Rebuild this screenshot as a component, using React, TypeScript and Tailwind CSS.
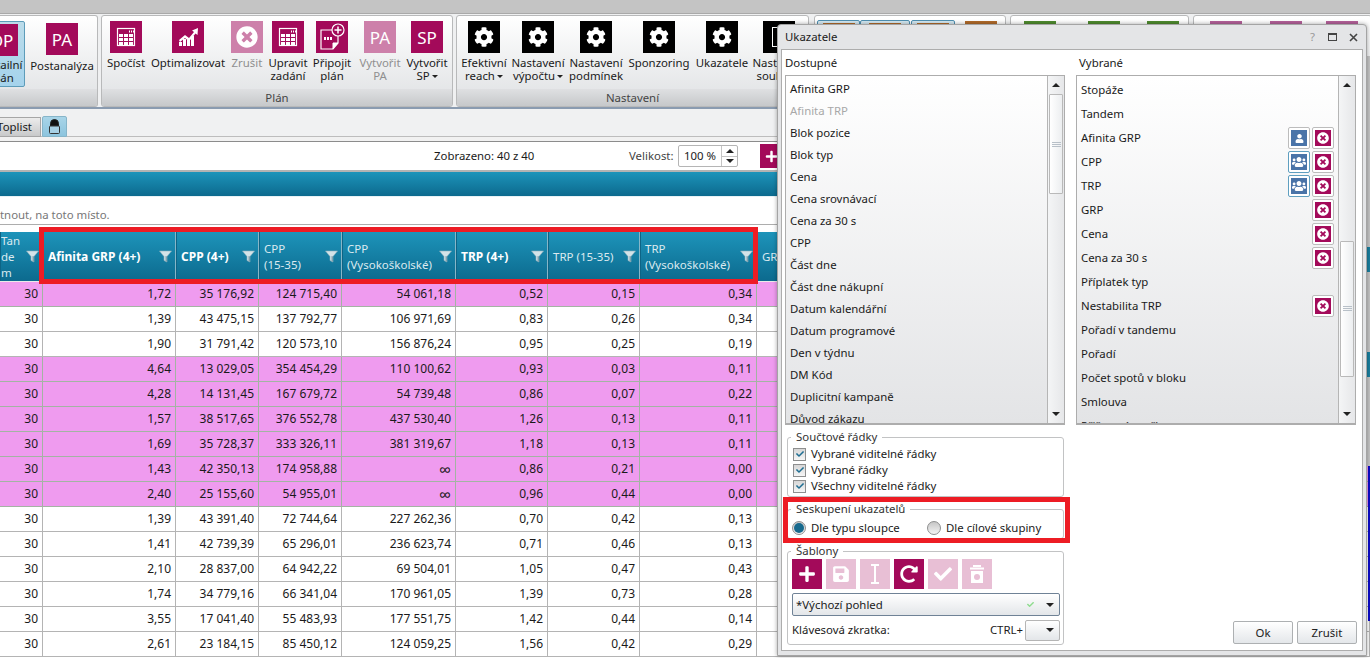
import React from "react";
import { FaCog, FaTimesCircle, FaUser, FaUsers, FaPlus, FaSave, FaRedoAlt, FaCheck } from "react-icons/fa";

const M = "bg-[#a30a5a]";
const Tile = ({ children, cls = M }: { children: React.ReactNode; cls?: string }) => (
  <div className={`w-[32px] h-[32px] shrink-0 flex items-center justify-center text-white ${cls}`}>{children}</div>
);

const TableIcon = () => (
  <svg width="32" height="32" viewBox="0 0 32 32">
    <rect x="7.5" y="7.5" width="17" height="17" fill="none" stroke="#fff" strokeWidth="1.2" />
    <rect x="19" y="9.5" width="1" height="2" fill="#fff" /><rect x="21" y="9.5" width="1" height="2" fill="#fff" /><rect x="23" y="9.5" width="1" height="2" fill="#fff" />
    {[0, 1, 2].map((r) => [0, 1, 2].map((c) => <rect key={`${r}${c}`} x={9 + c * 5} y={13 + r * 4} width="4" height="3" fill="#fff" />))}
  </svg>
);
const ChartIcon = () => (
  <svg width="32" height="32" viewBox="0 0 32 32" fill="#fff">
    <rect x="7" y="21" width="3" height="4" /><rect x="11" y="18" width="3" height="7" /><rect x="15" y="19" width="3" height="6" /><rect x="19" y="15" width="3" height="10" />
    <path d="M7 19l6-5 4 3 5-6-2-1.5 6-2.5-.5 7-2-1.5-6.5 8-4-3.5-5 4z" />
  </svg>
);
const DocIcon = () => (
  <svg width="32" height="32" viewBox="0 0 32 32">
    <path d="M5 9h17v13l-5 6H5z" fill="none" stroke="#fff" strokeWidth="1.2" />
    <path d="M22 22h-5v6" fill="#fff" stroke="#fff" strokeWidth="1" />
    <rect x="8" y="16" width="2" height="3" fill="#fff" /><rect x="11" y="16" width="2" height="3" fill="#fff" /><rect x="14" y="16" width="2" height="3" fill="#fff" />
    <circle cx="22" cy="9" r="6" fill="#a30a5a" stroke="#fff" strokeWidth="1.2" />
    <path d="M22 5.5v7M18.5 9h7" stroke="#fff" strokeWidth="1.5" />
  </svg>
);
const Caret = () => <span className="inline-block ml-[2px] align-middle border-x-[3px] border-x-transparent border-t-[3px] border-t-[#222]" />;

const Item = ({ w, tile, lines, dis, caret, top = "pt-[5px]", mtxt = "mt-[3px]" }: { w: string; tile: React.ReactNode; lines: string[]; dis?: boolean; caret?: boolean; top?: string; mtxt?: string }) => (
  <div className={`${w} ${top} shrink-0 flex flex-col items-center text-center leading-[13px] whitespace-nowrap ${dis ? "text-[#8f8f8f]" : "text-[#1a1a1a]"}`}>
    {tile}
    <div className={mtxt}>
      {lines.map((l, i) => (
        <div key={i}>{l}{caret && i === lines.length - 1 ? <Caret /> : null}</div>
      ))}
    </div>
  </div>
);

const Group = ({ cls, label, children }: { cls: string; label?: string; children: React.ReactNode }) => (
  <div className={`${cls} h-[92px] shrink-0 border border-[#b8b9ba] rounded-[3px] bg-gradient-to-b from-white to-[#dfe1e3] flex flex-col overflow-hidden`}>
    <div className="flex h-[73px]">{children}</div>
    <div className="h-[17px] bg-gradient-to-b from-[#dfe0e2] to-[#c6c8ca] text-center text-[#444] leading-[17px]">{label}</div>
  </div>
);
const Gear = () => <Tile cls="bg-black"><FaCog size={20} /></Tile>;

const TopTile = ({ cls, ml }: { cls: string; ml: string }) => <div className={`w-[32px] h-[32px] shrink-0 ${cls} ${ml} mt-[5px]`} />;
const TopBox = ({ w, ml }: { w: string; ml: string }) => (
  <div className={`${w} ${ml} h-[30px] mt-[4px] shrink-0 rounded-[2px] border border-[#4f8fb0] bg-[#d5e8f1] flex justify-center pt-[2px]`}>
    <div className="w-[32px] h-[26px] bg-[#b06a2a]" />
  </div>
);

const W = ["w-[43px]", "w-[133px]", "w-[83px]", "w-[83px]", "w-[114px]", "w-[92px]", "w-[92px]", "w-[117px]", "w-[613px]"];

const rows: string[][] = [
  ["1,72", "35 176,92", "124 715,40", "54 061,18", "0,52", "0,15", "0,34"],
  ["1,39", "43 475,15", "137 792,77", "106 971,69", "0,83", "0,26", "0,34"],
  ["1,90", "31 791,42", "120 573,10", "156 876,24", "0,95", "0,25", "0,19"],
  ["4,64", "13 029,05", "354 454,29", "110 100,62", "0,93", "0,03", "0,11"],
  ["4,28", "14 131,45", "167 679,72", "54 739,48", "0,86", "0,07", "0,22"],
  ["1,57", "38 517,65", "376 552,78", "437 530,40", "1,26", "0,13", "0,11"],
  ["1,69", "35 728,37", "333 326,11", "381 319,67", "1,18", "0,13", "0,11"],
  ["1,43", "42 350,13", "174 958,88", "∞", "0,86", "0,21", "0,00"],
  ["2,40", "25 155,60", "54 955,01", "∞", "0,96", "0,44", "0,00"],
  ["1,39", "43 391,40", "72 744,64", "227 262,36", "0,70", "0,42", "0,13"],
  ["1,41", "42 739,39", "65 296,01", "236 623,74", "0,71", "0,46", "0,13"],
  ["2,10", "28 837,00", "64 942,22", "69 504,01", "1,05", "0,47", "0,43"],
  ["1,74", "34 779,16", "66 341,04", "170 961,05", "1,39", "0,73", "0,28"],
  ["3,55", "17 041,40", "55 483,93", "177 551,75", "1,42", "0,44", "0,14"],
  ["2,61", "23 184,15", "85 450,12", "124 059,25", "1,56", "0,42", "0,29"],
];
const pink = [0, 3, 4, 5, 6, 7, 8];

const Funnel = () => (
  <svg width="13" height="13" viewBox="0 0 13 13" className="shrink-0 mt-[-1px]">
    <path d="M.5 1h12L8 6.500V12L5 10.500v-4z" fill="#d3e3e8" stroke="#8fb0bd" strokeWidth=".6" />
    <path d="M8 6.500V12l-1.500-.8V6z" fill="#7fa0ad" />
  </svg>
);

const Head = ({ w, lines, bold, noF, pl = "pl-[4px]" }: { w: string; lines: string[]; bold?: boolean; noF?: boolean; pl?: string }) => (
  <div className={`${w} ${pl} shrink-0 h-[49px] pt-[1px] border-r border-r-[#86b6c8] border-l border-l-[#0e6485] flex items-center pr-[3px] text-white bg-gradient-to-b from-[#1d94ba] to-[#0c6a8e] overflow-hidden`}>
    <div className={`flex-1 min-w-0 leading-[16px] whitespace-nowrap ${bold ? "font-bold text-[12px]" : "text-[#dbeaf0] text-[11.5px]"}`}>
      {lines.map((l) => <div key={l}>{l}</div>)}
    </div>
    {!noF && <Funnel />}
  </div>
);

const UpArrow = () => <div className="border-x-[4px] border-x-transparent border-b-[4px] border-b-[#222]" />;
const DownArrow = () => <div className="border-x-[4px] border-x-transparent border-t-[4px] border-t-[#222]" />;

const Scrollbar = ({ gap, h, grip }: { gap: string; h: string; grip: string }) => (
  <div className="w-[17px] shrink-0 h-full border-l border-l-[#b5b5b5] flex flex-col items-center bg-gradient-to-r from-[#f4f5f6] to-[#e6e7e9]">
    <div className="h-[18px] flex items-center justify-center"><UpArrow /></div>
    <div className={`${gap} ${h} w-[14px] bg-gradient-to-r from-white to-[#eceef0] border border-[#b9b9b9] rounded-[1px] flex flex-col items-center`}>
      <div className={`${grip} w-[9px] h-[5px] border-y border-y-[#b8c0c8] flex items-center`}><div className="w-full h-px bg-[#b8c0c8]" /></div>
    </div>
    <div className="mt-auto h-[18px] flex items-center justify-center"><DownArrow /></div>
  </div>
);

const availableList = ["Afinita GRP", "Afinita TRP", "Blok pozice", "Blok typ", "Cena", "Cena srovnávací", "Cena za 30 s", "CPP", "Část dne", "Část dne nákupní", "Datum kalendářní", "Datum programové", "Den v týdnu", "DM Kód", "Duplicitní kampaně", "Důvod zákazu"];

const selectedList: [string, string?, boolean?][] = [
  ["Stopáže"], ["Tandem"], ["Afinita GRP", "one", true], ["CPP", "many", true], ["TRP", "many", true], ["GRP", undefined, true], ["Cena", undefined, true], ["Cena za 30 s", undefined, true], ["Příplatek typ"], ["Nestabilita TRP", undefined, true], ["Pořadí v tandemu"], ["Pořadí"], ["Počet spotů v bloku"], ["Smlouva"], ["Přiřazení značky"],
];

const SmallBtn = ({ children, cls, frame }: { children: React.ReactNode; cls: string; frame: string }) => (
  <div className={`w-[22px] h-[22px] ml-[2px] rounded-[2px] border bg-white flex items-center justify-center ${frame}`}>
    <div className={`w-[16px] h-[16px] flex items-center justify-center text-white ${cls}`}>{children}</div>
  </div>
);

const Check = ({ label }: { label: string }) => (
  <div className="flex items-center h-[16px]">
    <div className="w-[13px] h-[13px] border border-[#8e8f8f] bg-gradient-to-b from-[#d6d6d6] to-[#f6f6f6] flex items-center justify-center text-[#1f6e92] shrink-0"><FaCheck size={8} /></div>
    <span className="ml-[5px]">{label}</span>
  </div>
);
const Radio = ({ label, on, w }: { label: string; on?: boolean; w: string }) => (
  <div className={`flex items-center ${w}`}>
    <div className="w-[14px] h-[14px] rounded-full border border-[#8e8f8f] bg-gradient-to-b from-[#c6c6c6] to-[#f4f4f4] flex items-center justify-center shrink-0">
      {on && <div className="w-[10px] h-[10px] rounded-full bg-[#17698d]" />}
    </div>
    <span className="ml-[5px]">{label}</span>
  </div>
);
const Field = ({ legend, cls, children }: { legend: string; cls: string; children: React.ReactNode }) => (
  <div className={`relative ml-[5px] w-[277px] border border-[#c2c3c4] rounded-[3px] ${cls}`}>
    <span className="absolute left-[3px] -top-[9px] bg-white px-[5px] leading-[16px] text-[#333]">{legend}</span>
    {children}
  </div>
);
const SqBtn = ({ children, on }: { children: React.ReactNode; on?: boolean }) => (
  <div className={`w-[30px] h-[30px] flex items-center justify-center text-white ${on ? "bg-[#a30a5a]" : "bg-[#e8bfd5]"}`}>{children}</div>
);
const Btn = ({ label }: { label: string }) => (
  <div className="w-[60px] h-[23px] rounded-[2px] border border-[#adb0b2] bg-gradient-to-b from-white to-[#e4e7ea] flex items-center justify-center text-[#222]">{label}</div>
);

export default function App() {
  return (
    <div className="relative w-[1370px] h-[658px] overflow-hidden bg-white text-[11.4px] text-[#1a1a1a] font-['Noto_Sans','Open_Sans',sans-serif]">
      <div className="h-[14px] bg-[#c4c4c4] border-b border-b-[#a9a9a9]" />
      {/* ribbon */}
      <div className="h-[95px] bg-[#eff0f1] border-b-2 border-b-[#8a9bb0] flex pt-px">
        <Group cls="w-[98px] border-l-0 rounded-l-none">
          <div className="flex -ml-[21px]">
            <div className="relative w-[46px] h-[66px] mt-[5px] rounded-[2px] border border-[#5d9cb9] bg-gradient-to-b from-[#bcdcea] to-[#a5d3ec]">
              <div className="w-full flex flex-col items-center pt-[2px] leading-[13px] whitespace-nowrap text-center">
                <Tile><span className="text-[17px]">DP</span></Tile>
                <div className="mt-[2px]">Detailní</div>
                <div>plán</div>
              </div>
            </div>
            <Item w="w-[74px]" top="pt-[7px]" mtxt="mt-[4px]" tile={<Tile><span className="text-[17px]">PA</span></Tile>} lines={["Postanalýza"]} />
          </div>
        </Group>
        <Group cls="w-[352px] ml-[3px]" label="Plán">
          <div className="flex pl-[2px]">
            <Item w="w-[44px]" tile={<Tile><TableIcon /></Tile>} lines={["Spočíst"]} />
            <Item w="w-[80px]" tile={<Tile><ChartIcon /></Tile>} lines={["Optimalizovat"]} />
            <Item w="w-[38px]" dis tile={<Tile cls="bg-[#cd80aa]"><FaTimesCircle size={22} /></Tile>} lines={["Zrušit"]} />
            <Item w="w-[44px]" tile={<Tile><TableIcon /></Tile>} lines={["Upravit", "zadání"]} />
            <Item w="w-[44px]" tile={<Tile><DocIcon /></Tile>} lines={["Připojit", "plán"]} />
            <Item w="w-[52px]" dis tile={<Tile cls="bg-[#cd80aa]"><span className="text-[17px]">PA</span></Tile>} lines={["Vytvořit", "PA"]} />
            <Item w="w-[42px]" caret tile={<Tile><span className="text-[17px]">SP</span></Tile>} lines={["Vytvořit", "SP"]} />
          </div>
        </Group>
        <Group cls="w-[353px] ml-[3px]" label="Nastavení">
          <div className="flex pl-[5px]">
            <Item w="w-[44px]" caret tile={<Gear />} lines={["Efektivní", "reach"]} />
            <Item w="w-[64px]" caret tile={<Gear />} lines={["Nastavení", "výpočtu"]} />
            <Item w="w-[52px]" tile={<Gear />} lines={["Nastavení", "podmínek"]} />
            <Item w="w-[74px]" tile={<Gear />} lines={["Sponzoring"]} />
            <Item w="w-[52px]" tile={<Gear />} lines={["Ukazatele"]} />
            <Item w="w-[62px]" tile={<Tile cls="bg-black"><div className="w-[14px] h-[20px] border border-white" /></Tile>} lines={["Nastavení", "souboru"]} />
          </div>
        </Group>
        <Group cls="w-[192px] ml-[5px]">
          <TopBox w="w-[43px]" ml="ml-[2px]" />
          <TopBox w="w-[50px]" ml="ml-0" />
          <TopBox w="w-[44px]" ml="ml-[1px]" />
          <TopTile cls="bg-[#b06a2a]" ml="ml-[10px]" />
        </Group>
        <Group cls="w-[179px] ml-[4px]">
          <TopTile cls="bg-[#4e8a2e]" ml="ml-[13px]" />
          <TopTile cls="bg-[#4e8a2e]" ml="ml-[32px]" />
          <TopTile cls="bg-[#4e8a2e]" ml="ml-[27px]" />
        </Group>
        <Group cls="w-[179px] ml-[4px]">
          <TopTile cls="bg-[#b4619a]" ml="ml-[16px]" />
          <TopTile cls="bg-[#b4619a]" ml="ml-[28px]" />
          <TopTile cls="bg-[#b4619a]" ml="ml-[24px]" />
        </Group>
      </div>
      {/* tabs */}
      <div className="h-[28px] bg-[#f0f1f2] border-b border-b-[#bdbdbd] flex items-end">
        <div className="w-[41px] h-[20px] -mb-px border border-l-0 border-[#a6a6a6] bg-gradient-to-b from-[#ececec] to-[#c8c9ca] overflow-hidden flex items-center justify-end pr-[8px]">Toplist</div>
        <div className="ml-[1px] w-[25px] h-[21px] -mb-px border border-[#86b5c9] rounded-t-[2px] bg-gradient-to-b from-[#a9d5e8] to-[#8cc4de] flex items-center justify-center">
          <svg width="13" height="15" viewBox="0 0 13 15">
            <path d="M2.500 7V4.500a4 4 0 018 0V7z" fill="#111" stroke="#222" />
            <rect x="1.500" y="7" width="10" height="7.500" rx="1" fill="#a7d0e4" stroke="#333" />
          </svg>
        </div>
      </div>
      <div className="h-[5px] bg-[#f1f1f1] border-b border-b-[#8c8c8c]" />
      {/* toolbar */}
      <div className="h-[30px] bg-white border-b-2 border-b-[#b3b3b3] flex items-center">
        <span className="ml-[434px] w-[195px]">Zobrazeno: 40 z 40</span>
        <span className="w-[49px] text-[#444]">Velikost:</span>
        <div className="w-[60px] h-[22px] rounded-[2px] border border-[#b5b5b5] flex items-center pl-[5px]">
          <span className="flex-1">100 %</span>
          <div className="w-[16px] h-full border-l border-l-[#c4c4c4] flex flex-col">
            <div className="flex-1 flex items-center justify-center border-b border-b-[#c4c4c4]"><UpArrow /></div>
            <div className="flex-1 flex items-center justify-center"><DownArrow /></div>
          </div>
        </div>
        <div className="ml-[22px] w-[24px] h-[24px] bg-[#a30a5a] text-white flex items-center justify-start pl-[5px]"><FaPlus size={13} /></div>
      </div>
      {/* teal band */}
      <div className="h-[25px] bg-gradient-to-b from-[#1d94ba] to-[#0c6a8e] border-b border-b-[#e7f1f5]" />
      <div className="h-[28px] bg-white border-b border-b-[#adadad] flex items-center pt-[9px] text-[#777]">
        <span>tnout, na toto místo.</span>
      </div>
      <div className="h-[7px] bg-white" />
      {/* table */}
      <div className="flex">
        <Head w={W[0]} pl="pl-0" lines={["Tan", "de", "m"]} />
        <Head w={W[1]} bold lines={["Afinita GRP (4+)"]} />
        <Head w={W[2]} bold lines={["CPP (4+)"]} />
        <Head w={W[3]} lines={["CPP", "(15-35)"]} />
        <Head w={W[4]} lines={["CPP", "(Vysokoškolské)"]} />
        <Head w={W[5]} bold lines={["TRP (4+)"]} />
        <Head w={W[6]} lines={["TRP (15-35)"]} />
        <Head w={W[7]} lines={["TRP", "(Vysokoškolské)"]} />
        <Head w={W[8]} noF lines={["GRP"]} />
      </div>
      <div className="h-px bg-[#eaeaea]" />
      {rows.map((r, i) => {
        const p = pink.includes(i);
        return (
          <div key={i} className={`flex h-[25px] text-[12px] border-b ${p ? "bg-[#ef9bef] border-b-[#a3b3a3]" : "bg-white border-b-[#b4b4b4]"}`}>
            {["30", ...r, ""].map((v, j) => (
              <div key={j} className={`${W[j]} shrink-0 border-r flex items-center justify-end pr-[4px] ${p ? "border-r-[#a3b3a3]" : "border-r-[#b4b4b4]"}`}>
                {v === "∞" ? <span className="text-[17px] leading-[17px]">∞</span> : v}
              </div>
            ))}
          </div>
        );
      })}

      {/* red marker over header */}
      <div className="absolute left-[39px] top-[227px] w-[719px] h-[57px] border-[5px] border-[#ed1c24] pointer-events-none" />

      {/* sliver right of dialog */}
      <div className="absolute left-[1367px] top-[56px] w-[3px] h-[410px] bg-[#c4c4c4] flex flex-col">
        <div className="mt-[191px] h-[25px] bg-[#1a7f9f]" />
        <div className="mt-[80px] h-[25px] bg-[#1a7f9f]" />
      </div>
      <div className="absolute left-[1368px] top-[466px] w-[2px] h-[155px] bg-[#0a0ac8]" />

      {/* dialog */}
      <div className="absolute left-[777px] top-[24px] w-[590px] h-[632px] rounded-t-[4px] border border-[#a4a4a4] bg-[#e4e5e7] shadow-[0_0_4px_rgba(0,0,0,0.35)] flex flex-col">
        <div className="h-[24px] flex items-center pl-[7px] pr-[8px] shrink-0">
          <span className="flex-1">Ukazatele</span>
          <span className="text-[#999] mr-[13px]">?</span>
          <div className="w-[9px] h-[8px] border border-[#444] border-t-2 mr-[12px]" />
          <svg width="9" height="9" viewBox="0 0 9 9"><path d="M1 1l7 7M8 1L1 8" stroke="#444" strokeWidth="1.6" /></svg>
        </div>
        <div className="mx-[3px] h-[602px] border border-[#adadad] bg-white flex">
          {/* left */}
          <div className="w-[293px] shrink-0">
            <div className="h-[25px] pl-[3px] flex items-center">Dostupné</div>
            <div className="ml-[3px] w-[280px] h-[350px] border border-[#adadad] border-b-2 bg-gradient-to-b from-white to-[#e3e4e6] flex overflow-hidden">
              <div className="flex-1 pt-[2px] pl-[4px]">
                {availableList.map((t, i) => (
                  <div key={t} className={`h-[22px] flex items-center ${i === 1 ? "text-[#a8a8a8]" : ""}`}>{t}</div>
                ))}
              </div>
              <Scrollbar gap="" h="h-[100px]" grip="mt-[47px]" />
            </div>
            <Field legend="Součtové řádky" cls="mt-[12px] h-[60px] pt-[8px] pl-[5px]">
              <Check label="Vybrané viditelné řádky" />
              <Check label="Vybrané řádky" />
              <Check label="Všechny viditelné řádky" />
            </Field>
            <Field legend="Seskupení ukazatelů" cls="mt-[12px] h-[30px] pt-[10px] pl-[4px]">
              <div className="flex items-center h-[16px]">
                <Radio w="w-[135px]" on label="Dle typu sloupce" />
                <Radio w="" label="Dle cílové skupiny" />
              </div>
            </Field>
            <Field legend="Šablony" cls="mt-[12px] h-[94px] pt-[7px] pl-[4px]">
              <div className="flex gap-[4px]">
                <SqBtn on><FaPlus size={18} /></SqBtn>
                <SqBtn><FaSave size={18} /></SqBtn>
                <SqBtn><svg width="10" height="20" viewBox="0 0 10 20"><path d="M1 1h8M1 19h8M5 1v18" stroke="#fff" strokeWidth="2" /></svg></SqBtn>
                <SqBtn on><FaRedoAlt size={18} /></SqBtn>
                <SqBtn><FaCheck size={18} /></SqBtn>
                <SqBtn><svg width="14" height="18" viewBox="0 0 14 18"><rect x="3" y="0" width="8" height="2" fill="#fff" /><rect x="0" y="2.500" width="14" height="2" fill="#fff" /><path d="M1 6h12v12H1z" fill="#fff" /><circle cx="7" cy="12" r="3" fill="#e8bfd5" /></svg></SqBtn>
              </div>
              <div className="mt-[4px] w-[268px] h-[23px] rounded-[2px] border border-[#6f8296] bg-gradient-to-b from-white to-[#e3e6e9] flex items-center pl-[3px] pr-[5px]">
                <span className="flex-1">*Výchozí pohled</span>
                <FaCheck size={7} className="text-[#8fdc8f] mr-[12px]" />
                <DownArrow />
              </div>
              <div className="mt-[4px] w-[268px] h-[20px] flex items-center">
                <span className="flex-1">Klávesová zkratka:</span>
                <span>CTRL+</span>
                <div className="ml-[2px] w-[35px] h-[21px] rounded-[2px] border border-[#b5b5b5] bg-gradient-to-b from-white to-[#e3e6e9] flex items-center justify-end pr-[5px]"><DownArrow /></div>
              </div>
            </Field>
          </div>
          {/* right */}
          <div className="flex-1 pl-[1px] flex flex-col">
            <div className="h-[25px] pl-[3px] flex items-center">Vybrané</div>
            <div className="w-[280px] h-[350px] border border-[#adadad] border-b-2 bg-gradient-to-b from-white to-[#e3e4e6] flex overflow-hidden">
              <div className="flex-1 pt-[2px] pl-[4px] pr-[4px] overflow-hidden">
                {selectedList.map(([t, g, x]) => (
                  <div key={t} className="h-[24px] flex items-center">
                    <span className="flex-1">{t}</span>
                    {g === "one" && <SmallBtn cls="bg-[#4a74a8]" frame="border-[#bcbcbc]"><FaUser size={9} /></SmallBtn>}
                    {g === "many" && <SmallBtn cls="bg-[#4a74a8]" frame="border-[#5f9fc0]"><FaUsers size={14} /></SmallBtn>}
                    {x && <SmallBtn cls="bg-[#a30a5a]" frame="border-[#bcbcbc]"><FaTimesCircle size={12} /></SmallBtn>}
                  </div>
                ))}
              </div>
              <Scrollbar gap="mt-[147px]" h="h-[136px]" grip="mt-[64px]" />
            </div>
            <div className="mt-auto pb-[6px] pr-[5px] flex justify-end gap-[4px]">
              <Btn label="Ok" />
              <Btn label="Zrušit" />
            </div>
          </div>
        </div>
      </div>

      {/* red marker over dialog */}
      <div className="absolute left-[783px] top-[497px] w-[287px] h-[46px] border-[5px] border-[#ed1c24] pointer-events-none" />
    </div>
  );
}
